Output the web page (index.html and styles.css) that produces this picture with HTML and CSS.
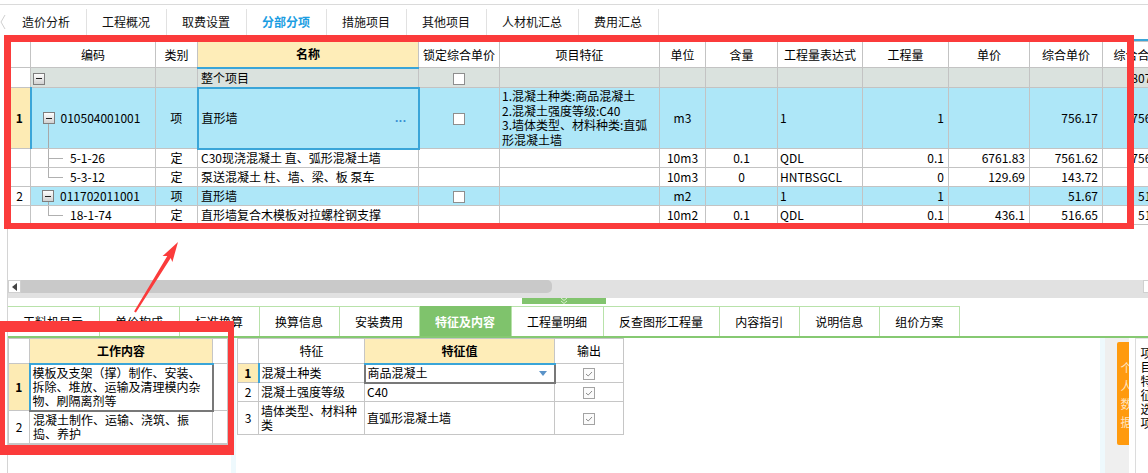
FILE: index.html
```html
<!DOCTYPE html>
<html lang="zh-CN">
<head>
<meta charset="utf-8">
<title>分部分项</title>
<link rel="stylesheet" href="styles.css">
</head>
<body>
<div class="topbar">
  <span class="tab-arrow"><svg width="7" height="26" viewBox="0 0 7 26"><polyline points="5,6 1,13 5,20" fill="none" stroke="#cfcfcf" stroke-width="1"/></svg></span>
  <nav class="tabs">
    <span class="tab">造价分析</span>
    <span class="tab">工程概况</span>
    <span class="tab">取费设置</span>
    <span class="tab on">分部分项</span>
    <span class="tab">措施项目</span>
    <span class="tab">其他项目</span>
    <span class="tab">人材机汇总</span>
    <span class="tab">费用汇总</span>
  </nav>
</div>
<div class="workspace">
  <section class="grid-pane">
    <div class="grid-wrap">
      <table class="grid">
        <colgroup>
          <col class="c-no"><col class="c-code"><col class="c-type"><col class="c-name"><col class="c-lock"><col class="c-feat"><col class="c-unit"><col class="c-qty"><col class="c-expr"><col class="c-amt"><col class="c-price"><col class="c-uprice"><col class="c-total">
        </colgroup>
        <thead>
          <tr class="h">
            <th></th><th>编码</th><th>类别</th><th class="cur-h">名称</th><th>锁定综合单价</th><th>项目特征</th><th>单位</th><th>含量</th><th>工程量表达式</th><th>工程量</th><th>单价</th><th>综合单价</th><th>综合合价</th>
          </tr>
        </thead>
        <tbody>
          <tr class="total">
            <td class="no"></td>
            <td class="code root"><span class="tbox"></span></td>
            <td></td>
            <td class="b">整个项目</td>
            <td class="ctr"><span class="cb"></span></td>
            <td></td><td></td><td></td><td></td><td></td><td></td><td></td>
            <td class="num b">807.84</td>
          </tr>
          <tr class="r1 sel">
            <td class="no cur">1</td>
            <td class="code lead tall"><div class="tree"><span class="tbox"></span>010504001001</div></td>
            <td class="ctr">项</td>
            <td class="edit-blue"><div class="name-edit"><span>直形墙</span><span class="dots">...</span></div></td>
            <td class="ctr"><span class="cb"></span></td>
            <td class="feat-text">1.混凝土种类:商品混凝土<br>2.混凝土强度等级:C40<br>3.墙体类型、材料种类:直弧<br>形混凝土墙</td>
            <td class="ctr">m3</td>
            <td></td>
            <td>1</td>
            <td class="num">1</td>
            <td></td>
            <td class="num">756.17</td>
            <td class="num">756.17</td>
          </tr>
          <tr class="r">
            <td class="no"></td>
            <td class="code"><div class="tree child"><span class="elbow"></span>5-1-26</div></td>
            <td class="ctr">定</td>
            <td>C30现浇混凝土 直、弧形混凝土墙</td>
            <td></td><td></td>
            <td class="ctr">10m3</td>
            <td class="ctr">0.1</td>
            <td>QDL</td>
            <td class="num">0.1</td>
            <td class="num">6761.83</td>
            <td class="num">7561.62</td>
            <td class="num">756.16</td>
          </tr>
          <tr class="r">
            <td class="no"></td>
            <td class="code"><div class="tree child"><span class="elbow last"></span>5-3-12</div></td>
            <td class="ctr">定</td>
            <td>泵送混凝土 柱、墙、梁、板 泵车</td>
            <td></td><td></td>
            <td class="ctr">10m3</td>
            <td class="ctr">0</td>
            <td>HNTBSGCL</td>
            <td class="num">0</td>
            <td class="num">129.69</td>
            <td class="num">143.72</td>
            <td></td>
          </tr>
          <tr class="r sel">
            <td class="no">2</td>
            <td class="code lead short"><div class="tree"><span class="tbox"></span>011702011001</div></td>
            <td class="ctr">项</td>
            <td>直形墙</td>
            <td class="ctr"><span class="cb"></span></td>
            <td></td>
            <td class="ctr">m2</td>
            <td></td>
            <td>1</td>
            <td class="num">1</td>
            <td></td>
            <td class="num">51.67</td>
            <td class="num">51.67</td>
          </tr>
          <tr class="r">
            <td class="no"></td>
            <td class="code"><div class="tree child"><span class="elbow last"></span>18-1-74</div></td>
            <td class="ctr">定</td>
            <td>直形墙复合木模板对拉螺栓钢支撑</td>
            <td></td><td></td>
            <td class="ctr">10m2</td>
            <td class="ctr">0.1</td>
            <td>QDL</td>
            <td class="num">0.1</td>
            <td class="num">436.1</td>
            <td class="num">516.65</td>
            <td class="num">51.67</td>
          </tr>
        </tbody>
      </table>
    </div>
  </section>

  <div class="hscroll">
    <span class="hs-btn"><svg width="5" height="8" viewBox="0 0 5 8"><polygon points="5,0 0,4 5,8" fill="#444"/></svg></span>
    <span class="hs-thumb"></span>
    <span class="hs-btn end"></span>
  </div>
  <div class="splitter">
    <span class="split-handle"><svg width="10" height="6" viewBox="0 0 10 6"><polyline points="2,0 5,2.5 8,0" fill="none" stroke="#d9f0d0" stroke-width="1"/><polyline points="2,3 5,5.5 8,3" fill="none" stroke="#d9f0d0" stroke-width="1"/></svg></span>
  </div>

  <nav class="subtabs">
    <span class="stab">工料机显示</span>
    <span class="stab">单价构成</span>
    <span class="stab">标准换算</span>
    <span class="stab">换算信息</span>
    <span class="stab">安装费用</span>
    <span class="stab on">特征及内容</span>
    <span class="stab">工程量明细</span>
    <span class="stab">反查图形工程量</span>
    <span class="stab">内容指引</span>
    <span class="stab">说明信息</span>
    <span class="stab">组价方案</span>
  </nav>

  <div class="detail">
    <div class="work-pane">
      <table class="mini work">
        <colgroup><col class="m-no"><col class="m-work"><col class="m-pad"></colgroup>
        <thead>
          <tr class="mh"><th></th><th class="cur-h">工作内容</th><th></th></tr>
        </thead>
        <tbody>
          <tr class="w1"><td class="no cur">1</td><td class="sel-cell">模板及支架（撑）制作、安装、拆除、堆放、运输及清理模内杂物、刷隔离剂等</td><td></td></tr>
          <tr class="w2"><td class="no">2</td><td>混凝土制作、运输、浇筑、振捣、养护</td><td></td></tr>
        </tbody>
      </table>
    </div>
    <div class="vsplit"></div>
    <div class="feat-pane">
      <table class="mini feat">
        <colgroup><col class="m-no"><col class="f-name"><col class="f-val"><col class="f-out"></colgroup>
        <thead>
          <tr class="mh"><th></th><th>特征</th><th class="cur-h">特征值</th><th>输出</th></tr>
        </thead>
        <tbody>
          <tr class="fr"><td class="no cur">1</td><td class="lead-cell">混凝土种类</td><td class="val-cell"><div class="val-edit"><span>商品混凝土</span><span class="dd"></span></div></td><td class="ctr"><span class="cb on"><svg width="10" height="10" viewBox="0 0 10 10"><polyline points="2,5 4.2,7 8,3" fill="none" stroke="#8c8c8c" stroke-width="1"/></svg></span></td></tr>
          <tr class="fr"><td class="no">2</td><td>混凝土强度等级</td><td>C40</td><td class="ctr"><span class="cb on"><svg width="10" height="10" viewBox="0 0 10 10"><polyline points="2,5 4.2,7 8,3" fill="none" stroke="#8c8c8c" stroke-width="1"/></svg></span></td></tr>
          <tr class="fr3"><td class="no">3</td><td>墙体类型、材料种类</td><td>直弧形混凝土墙</td><td class="ctr"><span class="cb on"><svg width="10" height="10" viewBox="0 0 10 10"><polyline points="2,5 4.2,7 8,3" fill="none" stroke="#8c8c8c" stroke-width="1"/></svg></span></td></tr>
        </tbody>
      </table>
    </div>
    <div class="vsplit"></div>
    <div class="side-gray"><div class="side-tab"><span>个人数据</span></div></div>
    <div class="side-white"><div class="side-box"><span>项目特征选项</span></div></div>
  </div>
</div>

<div class="annot box1"></div>
<div class="annot box2"></div>
<svg class="arrow" width="1148" height="473" viewBox="0 0 1148 473">
  <polygon points="134.1,311.5 167.3,256 162.6,256.1 178,242 172.4,261.9 170.7,258 135.9,312.5" fill="#fb3b3b"/>
</svg>
</body>
</html>
```

FILE: styles.css
```css
* { box-sizing: border-box; }
html, body { margin: 0; padding: 0; }
body {
  position: relative;
  width: 1148px;
  height: 473px;
  overflow: hidden;
  background: #fff;
  color: #000;
  font-family: "Noto Sans CJK SC", "Noto Sans", sans-serif;
  font-size: 12px;
  line-height: 14px;
}

/* top tabs */
.topbar {
  margin-top: 4px;
  border-top: 1px solid #dadada;
  height: 31px;
  display: flex;
  align-items: flex-end;
}
.tab-arrow { width: 7px; height: 26px; display: flex; }
.tabs { display: flex; height: 26px; }
.tab {
  padding: 0 16px 0 15px;
  border-right: 1px solid #e1e1e1;
  line-height: 26px;
  color: #111;
}
.tab.on { color: #1a9de2; font-weight: bold; }

/* workspace */
.workspace {
  margin-left: 7px;
  border-left: 1px solid #d4d4d4;
  height: 438px;
  display: flex;
  flex-direction: column;
}
.grid-pane { height: 245px; padding-top: 4px; overflow: hidden; flex: none; }
.grid-wrap { border-top: 2px solid #3aa5d8; }

.grid { border-collapse: collapse; table-layout: fixed; width: 1164px; }
.grid th, .grid td {
  border: 1px solid #c3c3c3;
  padding: 0 3px;
  white-space: nowrap;
  overflow: hidden;
  font-weight: normal;
  text-align: left;
  vertical-align: middle;
}
.grid th { text-align: center; background: #fff; }
.c-no { width: 22px; }
.c-code { width: 125px; }
.c-type { width: 42px; }
.c-name { width: 221px; }
.c-lock { width: 81px; }
.c-feat { width: 160px; }
.c-unit { width: 46px; }
.c-qty { width: 72px; }
.c-expr { width: 85px; }
.c-amt { width: 86px; }
.c-price { width: 81px; }
.c-uprice { width: 73px; }
.c-total { width: 70px; }

.grid .h { height: 26px; }
.grid .total { height: 20px; background: #dae2de; }
.grid .r1 { height: 61px; }
.grid .r { height: 19px; }
.grid .sel { background: #aee7f8; }
.grid td.no, .grid th:first-child { background: #fff; text-align: center; padding: 0; }
.grid td.no.cur { background: #fdebb4; font-weight: bold; }
.cur-h { background: #feedb8 !important; font-weight: bold !important; border-bottom: 2px solid #3aa5d8 !important; }
.b { font-weight: bold; }
.ctr { text-align: center !important; }
.num { text-align: right !important; padding-right: 4px !important; }
.grid td:nth-child(9) { padding-left: 2px; }

/* tree */
.grid td.code { padding: 0 0 0 11px; }
.grid td.code.root { padding-left: 2px; }
.grid td.lead { border-left: 2px solid #3aa5d8; }
.grid td.lead.tall { background: linear-gradient(#a8a8a8, #a8a8a8) no-repeat 16px 100% / 1px 25px; }
.grid td.lead.short { border-left: 1px solid #c3c3c3; background: linear-gradient(#a8a8a8, #a8a8a8) no-repeat 17px 100% / 1px 4px; }
.tree { display: flex; align-items: center; height: 18px; }
.tree.child { padding-left: 6px; }
.tbox {
  display: inline-block;
  width: 12px;
  height: 12px;
  margin-right: 6px;
  border: 1px solid #7f7f7f;
  background: linear-gradient(#222, #222) no-repeat center / 6px 1px, linear-gradient(#fdfdfd, #d2d2d2);
  vertical-align: middle;
}
.elbow {
  align-self: stretch;
  width: 15px;
  margin-right: 7px;
  background: linear-gradient(#b0b0b0, #b0b0b0) no-repeat 0 0 / 1px 100%, linear-gradient(#b0b0b0, #b0b0b0) no-repeat 0 50% / 100% 1px;
}
.elbow.last {
  background: linear-gradient(#b0b0b0, #b0b0b0) no-repeat 0 0 / 1px 50%, linear-gradient(#b0b0b0, #b0b0b0) no-repeat 0 50% / 100% 1px;
}

.grid td.edit-blue { border: 2px solid #3aa5d8; }
.name-edit { display: flex; justify-content: space-between; align-items: center; padding-right: 8px; }
.dots {
  color: #3b8fd2;
  font-family: "Liberation Sans", sans-serif;
  font-weight: bold;
  font-size: 12px;
  letter-spacing: 0.5px;
  line-height: 10px;
}
.grid td.feat-text { padding-left: 2px; line-height: 14.5px; }

.cb {
  display: inline-block;
  width: 12px;
  height: 12px;
  border: 1px solid #8e8e8e;
  background: #fff;
  vertical-align: middle;
}
.cb.on { border-color: #a3a3a3; background: #fbfbfb; display: inline-flex; align-items: center; justify-content: center; }

/* scrollbar + splitter */
.hscroll { height: 18px; width: 1148px; background: #e1e1e1; display: flex; align-items: flex-start; flex: none; }
.hs-btn {
  width: 13px;
  height: 13px;
  background: #fff;
  border: 1px solid #d0d0d0;
  display: flex;
  align-items: center;
  justify-content: center;
  flex: none;
}
.hs-btn.end { margin-left: auto; }
.hs-thumb { width: 531px; height: 13px; background: #c9c9c9; border-radius: 0 5px 5px 0; flex: none; }
.splitter { height: 8px; flex: none; }
.split-handle {
  display: flex;
  justify-content: center;
  margin-left: 514px;
  width: 84px;
  height: 6px;
  background: #82c46e;
}

/* sub tabs */
.subtabs { display: flex; height: 32px; border-bottom: 2px solid #86c972; flex: none; }
.stab {
  padding: 0 16px 0 15px;
  border-top: 1px solid #b8e2aa;
  border-right: 1px solid #b8e2aa;
  line-height: 29px;
}
.stab.on { background: #7fc36c; color: #fff; font-weight: bold; border-top-color: #7fc36c; }

/* detail panes */
.detail { display: flex; flex: 1; min-height: 0; overflow: hidden; }
.work-pane { width: 223px; flex: none; }
.vsplit { width: 5px; background: #eef9fd; flex: none; }
.feat-pane { flex: 1; padding-left: 1px; }

.mini { border-collapse: collapse; table-layout: fixed; }
.mini th, .mini td {
  border: 1px solid #c6c6c6;
  padding: 0 2px;
  text-align: left;
  vertical-align: middle;
  font-weight: normal;
  overflow: hidden;
}
.mini th { text-align: center; background: #fff; }
.mini td.no { text-align: center; padding: 0; }
.mini td.no.cur { background: #fdebb4; font-weight: bold; }
.mini .mh { height: 25px; }
.work { width: 219px; border-bottom: 2px solid #c6c6c6; }
.m-no { width: 21px; }
.m-work { width: 183px; }
.m-pad { width: 15px; }
.work .w1 { height: 47px; }
.work .w2 { height: 33px; }
.work td.sel-cell {
  border-left: 2px solid #3aa5d8;
  border-right: 2px solid #787878;
  border-bottom: 2px solid #787878;
  padding-left: 2px;
  line-height: 14px;
}
.work .w2 td:nth-child(2) { padding-left: 3px; line-height: 14px; }

.feat { width: 386px; }
.f-name { width: 106px; }
.f-val { width: 190px; }
.f-out { width: 69px; }
.feat .fr { height: 19px; }
.feat .fr3 { height: 33px; }
.feat td.lead-cell { border-left: 2px solid #3aa5d8; }
.feat td.val-cell { border: 2px solid #787878; border-top: 2px solid #3aa5d8; }
.val-edit { display: flex; justify-content: space-between; align-items: center; padding-right: 5px; }
.dd {
  width: 0;
  height: 0;
  border-left: 4px solid transparent;
  border-right: 4px solid transparent;
  border-top: 5px solid #5a93c8;
}

.side-gray { width: 24px; flex: none; background: #efefef; padding: 4px 0 0 12px; }
.side-tab {
  width: 12px;
  height: 103px;
  background: #ff9a0e;
  border-radius: 2px 0 0 2px;
  overflow: hidden;
  display: flex;
}
.side-tab span {
  writing-mode: vertical-rl;
  margin: 20px 0 0 3px;
  color: #ffe2bd;
  letter-spacing: 6px;
  line-height: 12px;
}
.side-white { width: 19px; flex: none; padding-left: 6px; overflow: hidden; }
.side-box {
  height: 100%;
  border-left: 1px solid #dcdcdc;
  border-top: 1px solid #e4e4e4;
  padding: 8px 0 0 4px;
}
.side-box span {
  display: block;
  writing-mode: vertical-rl;
  letter-spacing: 2px;
  line-height: 12px;
}

/* annotations drawn over the screenshot */
.annot { position: absolute; border-style: solid; border-color: #fb3b3b; pointer-events: none; }
.box1 { left: 4px; top: 35px; width: 1130px; height: 194px; border-width: 7px 7px 6px 7px; }
.box2 { left: 0; top: 321px; width: 234px; height: 134px; border-width: 11px 6px 10px 5px; }
.arrow { position: absolute; left: 0; top: 0; pointer-events: none; }
```
